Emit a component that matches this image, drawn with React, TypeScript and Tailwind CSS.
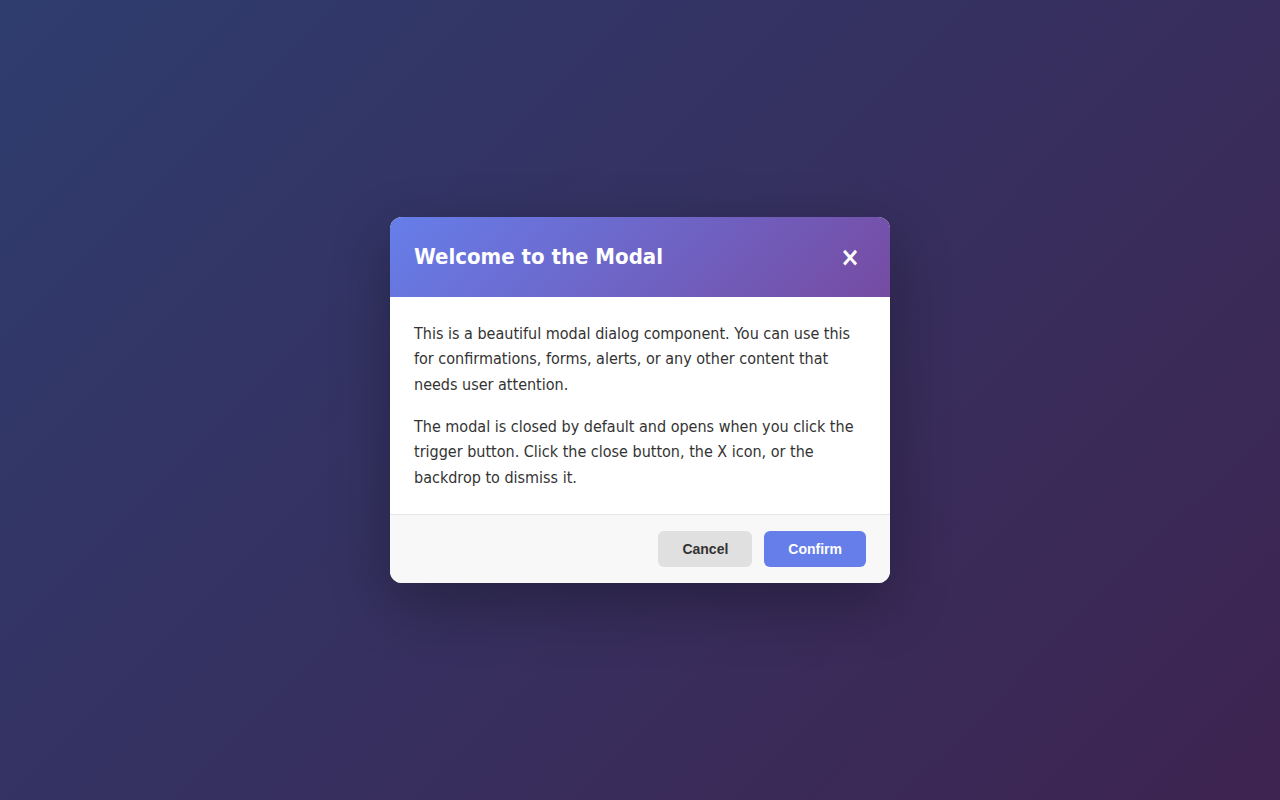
export default function App() {
  return (
    <div className="min-h-screen w-full flex items-center justify-center bg-[linear-gradient(135deg,#2e3c6e_0%,#3e2451_100%)] font-['DejaVu_Sans_Condensed','DejaVu_Sans',sans-serif]">
      <div className="w-[500px] rounded-xl overflow-hidden bg-white shadow-[0_20px_60px_rgba(0,0,0,0.3)]">
        {/* Header */}
        <div className="h-20 px-6 flex items-center justify-between bg-[linear-gradient(135deg,#667eea_0%,#764ba2_100%)]">
          <h2 className="text-[22px] font-bold text-white leading-none">Welcome to the Modal</h2>
          <button className="w-8 h-8 flex items-center justify-center text-white text-[26px] font-bold leading-none">
            ×
          </button>
        </div>

        {/* Body */}
        <div className="p-6 text-[16px] leading-[1.6] text-[#333]">
          <p className="mb-4">
            This is a beautiful modal dialog component. You can use this for confirmations, forms, alerts, or any
            other content that needs user attention.
          </p>
          <p>
            The modal is closed by default and opens when you click the trigger button. Click the close button, the
            X icon, or the backdrop to dismiss it.
          </p>
        </div>

        {/* Footer */}
        <div className="px-6 py-4 border-t border-[#e5e5e5] bg-[#f8f8f8] flex justify-end gap-3 font-['Liberation_Sans',Arial,sans-serif]">
          <button className="px-6 h-9 rounded-md bg-[#e0e0e0] text-[#333] text-sm font-bold">Cancel</button>
          <button className="px-6 h-9 rounded-md bg-[#667eea] text-white text-sm font-bold">Confirm</button>
        </div>
      </div>
    </div>
  );
}
